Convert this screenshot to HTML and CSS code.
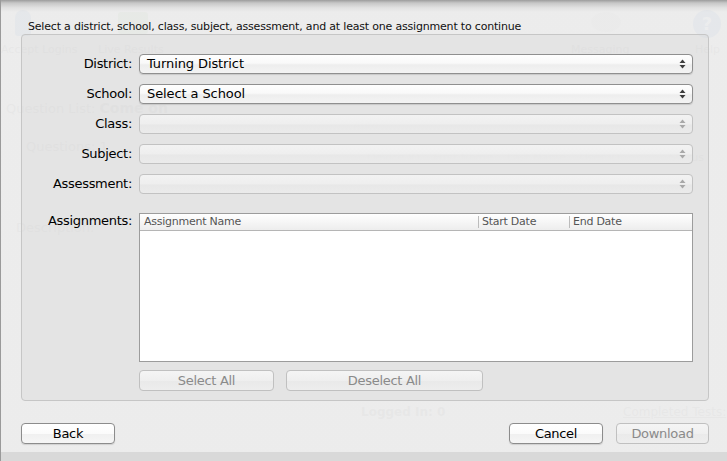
FILE: index.html
```html
<!DOCTYPE html>
<html>
<head>
<meta charset="utf-8">
<link rel="stylesheet" href="styles.css">
</head>
<body>
<div class="window">
  <div class="backdrop">
    <div class="ghost g-person"></div>
    <div class="ghost g-live"></div>
    <div class="ghost g-bubble"></div>
    <div class="ghost g-help">?</div>
    <span class="ghost-text g1">Accept Logins</span>
    <span class="ghost-text g2">Live Results</span>
    <span class="ghost-text g3">Messaging</span>
    <span class="ghost-text g4">Help</span>
    <span class="ghost-text g5">Question List: <b>Come on</b></span>
    <span class="ghost-text g6">Questions: 1</span>
    <span class="ghost-text g7">Description:</span>
    <span class="ghost-text g8">Auto</span>
    <span class="ghost-text g9">Device ID &nbsp;&nbsp; First Name &nbsp;&nbsp; Last Name &nbsp;&nbsp; User ID</span>
    <span class="ghost-text g10">Status</span>
    <span class="ghost-text g11">Logged In: 0</span>
    <span class="ghost-text g12">Completed Tests:</span>
  </div>

  <div class="sheet">
    <p class="instruction">Select a district, school, class, subject, assessment, and at least one assignment to continue</p>

    <div class="group">
      <div class="form">
        <label class="label">District:</label>
        <div class="select">
          <span class="select-value">Turning District</span>
          <svg class="arrows" width="7" height="10" viewBox="0 0 7 10"><path d="M3.5 0.5 L6.5 4 L0.5 4 Z" fill="#3c3c3c"/><path d="M0.5 6 L6.5 6 L3.5 9.5 Z" fill="#3c3c3c"/></svg>
        </div>

        <label class="label">School:</label>
        <div class="select">
          <span class="select-value">Select a School</span>
          <svg class="arrows" width="7" height="10" viewBox="0 0 7 10"><path d="M3.5 0.5 L6.5 4 L0.5 4 Z" fill="#3c3c3c"/><path d="M0.5 6 L6.5 6 L3.5 9.5 Z" fill="#3c3c3c"/></svg>
        </div>

        <label class="label">Class:</label>
        <div class="select disabled">
          <span class="select-value"></span>
          <svg class="arrows" width="7" height="10" viewBox="0 0 7 10"><path d="M3.5 0.5 L6.5 4 L0.5 4 Z" fill="#a8a8a8"/><path d="M0.5 6 L6.5 6 L3.5 9.5 Z" fill="#a8a8a8"/></svg>
        </div>

        <label class="label">Subject:</label>
        <div class="select disabled">
          <span class="select-value"></span>
          <svg class="arrows" width="7" height="10" viewBox="0 0 7 10"><path d="M3.5 0.5 L6.5 4 L0.5 4 Z" fill="#a8a8a8"/><path d="M0.5 6 L6.5 6 L3.5 9.5 Z" fill="#a8a8a8"/></svg>
        </div>

        <label class="label">Assessment:</label>
        <div class="select disabled">
          <span class="select-value"></span>
          <svg class="arrows" width="7" height="10" viewBox="0 0 7 10"><path d="M3.5 0.5 L6.5 4 L0.5 4 Z" fill="#a8a8a8"/><path d="M0.5 6 L6.5 6 L3.5 9.5 Z" fill="#a8a8a8"/></svg>
        </div>

        <label class="label label-top">Assignments:</label>
        <div class="assign">
          <div class="table">
            <div class="thead">
              <div class="th th-name">Assignment Name</div>
              <div class="th th-start">Start Date</div>
              <div class="th th-end">End Date</div>
            </div>
            <div class="tbody"></div>
          </div>
          <div class="table-actions">
            <button class="btn disabled btn-select">Select All</button>
            <button class="btn disabled btn-deselect">Deselect All</button>
          </div>
        </div>
      </div>
    </div>

    <div class="footer">
      <button class="btn btn-back">Back</button>
      <div class="footer-right">
        <button class="btn btn-cancel">Cancel</button>
        <button class="btn disabled btn-download">Download</button>
      </div>
    </div>
  </div>
</div>
</body>
</html>
```

FILE: styles.css
```css
* { box-sizing: border-box; }

html, body {
  margin: 0;
  padding: 0;
}

body {
  width: 727px;
  height: 461px;
  overflow: hidden;
  background: #d9d9d9;
  font-family: "DejaVu Sans", "Liberation Sans", sans-serif;
}

.window {
  position: relative;
  width: 727px;
  height: 461px;
  border-left: 1px solid #9a9a9a;
}

/* window content visible faintly behind the translucent sheet */
.backdrop {
  position: absolute;
  inset: 0 0 9px 0;
  background: #e6e6e6;
  z-index: 0;
}

.ghost-text {
  position: absolute;
  font-size: 12px;
  color: #bababa;
  white-space: nowrap;
}
.g1 { left: 0; top: 43px; font-size: 11px; }
.g2 { left: 97px; top: 43px; font-size: 11px; }
.g3 { left: 570px; top: 43px; font-size: 11px; }
.g4 { left: 694px; top: 43px; font-size: 11px; }
.g5 { left: 5px; top: 100px; font-size: 13px; }
.g5 b { font-size: 14px; }
.g6 { left: 25px; top: 139px; font-size: 13px; }
.g7 { left: 15px; top: 220px; font-size: 13px; }
.g8 { left: 352px; top: 119px; font-size: 11px; }
.g9 { left: 366px; top: 151px; font-size: 11px; }
.g10 { left: 668px; top: 151px; font-size: 11px; }
.g11 { left: 360px; top: 405px; font-size: 12px; font-weight: bold; }
.g12 { left: 622px; top: 405px; font-size: 12px; text-decoration: underline; }

.ghost { position: absolute; }
.g-person { left: 14px; top: 10px; width: 16px; height: 26px; border-radius: 8px 8px 3px 3px; background: #aabfd8; }
.g-live { left: 117px; top: 12px; width: 30px; height: 22px; border-radius: 3px; background: #bcd0b6; }
.g-bubble { left: 590px; top: 12px; width: 30px; height: 20px; border-radius: 50%; background: #d8d8d8; }
.g-help { left: 692px; top: 10px; width: 28px; height: 28px; border-radius: 50%; background: #aabcd9; color: #e2e8f1; font-size: 18px; font-weight: bold; text-align: center; line-height: 28px; }

.sheet {
  position: relative;
  z-index: 1;
  height: 452px;
  background: linear-gradient(to bottom, rgba(150,150,150,0.92) 0px, rgba(196,196,196,0.9) 3px, rgba(226,226,226,0.88) 8px, rgba(237,237,237,0.88) 12px, rgba(237,237,237,0.88) 100%);
  display: flex;
  flex-direction: column;
  padding: 0 18px 0 20px;
}

.instruction {
  margin: 19px 0 0 7px;
  font-size: 11px;
  line-height: 15px;
  color: #111;
  letter-spacing: -0.19px;
  height: 15px;
  white-space: nowrap;
}

.group {
  margin-top: 0;
  height: 367px;
  border: 1px solid #c6c6c6;
  border-radius: 4px;
  background: rgba(205,205,205,0.25);
  padding: 19px 15px 0 0;
}

.form {
  display: grid;
  grid-template-columns: 110px 554px;
  column-gap: 7px;
  row-gap: 10px;
}

.label {
  text-align: right;
  font-size: 13px;
  line-height: 20px;
  color: #000;
  letter-spacing: -0.3px;
}

.label-top {
  margin-top: 8px;
  line-height: 18px;
}

.select {
  height: 20px;
  border: 1px solid #8f8f8f;
  border-radius: 4px;
  background: linear-gradient(to bottom, rgba(255,255,255,0.96) 0%, rgba(250,250,250,0.96) 45%, rgba(238,238,238,0.96) 55%, rgba(244,244,244,0.96) 100%);
  box-shadow: 0 1px 1px rgba(0,0,0,0.12);
  display: flex;
  align-items: center;
  justify-content: space-between;
  padding: 0 6px 0 7px;
}

.select.disabled {
  border-color: #c2c2c2;
  background: linear-gradient(to bottom, rgba(245,245,245,0.85) 0%, rgba(240,240,240,0.85) 50%, rgba(232,232,232,0.85) 55%, rgba(236,236,236,0.85) 100%);
  box-shadow: none;
}

.select-value {
  font-size: 13px;
  color: #000;
  letter-spacing: -0.1px;
  line-height: 18px;
}

.arrows { display: block; }

.assign {
  margin-top: 9px;
  display: flex;
  flex-direction: column;
}

.table {
  height: 149px;
  border: 1px solid #9c9c9c;
  background: #fff;
  display: flex;
  flex-direction: column;
}

.thead {
  height: 17px;
  display: flex;
  background: linear-gradient(to bottom, #ffffff 0%, #f6f6f6 50%, #ededed 100%);
  border-bottom: 1px solid #b5b5b5;
}

.th {
  font-size: 11px;
  line-height: 16px;
  color: #555;
  padding-left: 4px;
  letter-spacing: -0.25px;
  position: relative;
}

.th-name { width: 338px; }
.th-start { width: 91px; }
.th-end { flex: 1; }

.th-start::before,
.th-end::before {
  content: "";
  position: absolute;
  left: 0;
  top: 2px;
  height: 12px;
  border-left: 1px solid #bcbcbc;
}

.tbody { flex: 1; }

.table-actions {
  margin-top: 8px;
  display: flex;
  gap: 12px;
}

.btn {
  height: 21px;
  border: 1px solid #8c8c8c;
  border-radius: 4px;
  background: linear-gradient(to bottom, #ffffff 0%, #fbfbfb 50%, #f0f0f0 55%, #f6f6f6 100%);
  box-shadow: 0 1px 1px rgba(0,0,0,0.12);
  font-family: "DejaVu Sans", "Liberation Sans", sans-serif;
  font-size: 13px;
  line-height: 18px;
  color: #000;
  padding: 0;
  letter-spacing: -0.3px;
}

.btn.disabled {
  border-color: #c0c0c0;
  background: linear-gradient(to bottom, rgba(246,246,246,0.9) 0%, rgba(240,240,240,0.9) 50%, rgba(234,234,234,0.9) 55%, rgba(238,238,238,0.9) 100%);
  box-shadow: none;
  color: #8a8a8a;
}

.btn-select { width: 135px; }
.btn-deselect { width: 197px; }

.footer {
  margin-top: 22px;
  display: flex;
  justify-content: space-between;
  align-items: center;
}

.footer-right {
  display: flex;
  gap: 13px;
}

.btn-back { width: 94px; }
.btn-cancel { width: 94px; }
.btn-download { width: 93px; }
```
